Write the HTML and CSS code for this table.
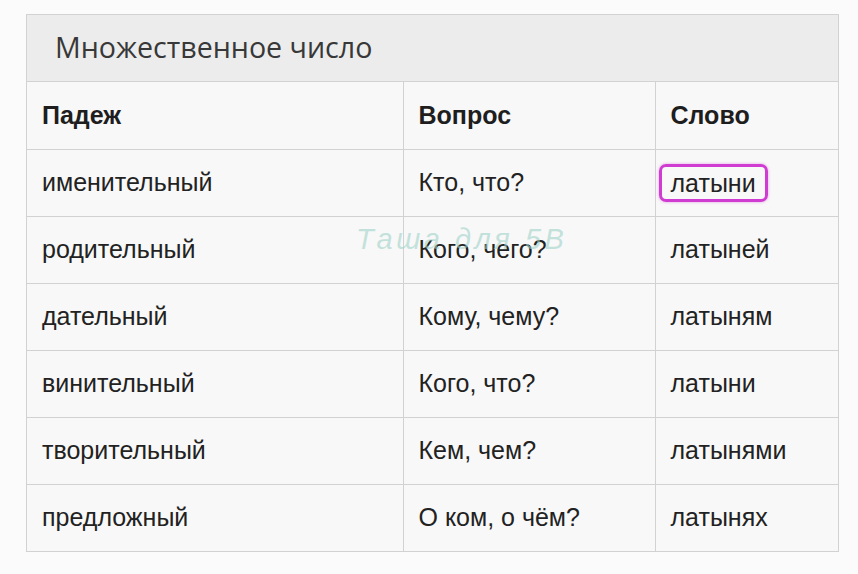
FILE: index.html
```html
<!DOCTYPE html>
<html lang="ru">
<head>
<meta charset="utf-8">
<title>Множественное число</title>
<link rel="stylesheet" href="styles.css">
</head>
<body>
<div class="card">
  <div class="caption">Множественное число</div>
  <table class="grid">
    <colgroup>
      <col class="c1"><col class="c2"><col class="c3">
    </colgroup>
    <thead>
      <tr><th>Падеж</th><th>Вопрос</th><th>Слово</th></tr>
    </thead>
    <tbody>
      <tr><td>именительный</td><td>Кто, что?</td><td><span class="mark">латыни</span></td></tr>
      <tr><td>родительный</td><td>Кого, чего?</td><td>латыней</td></tr>
      <tr><td>дательный</td><td>Кому, чему?</td><td>латыням</td></tr>
      <tr><td>винительный</td><td>Кого, что?</td><td>латыни</td></tr>
      <tr><td>творительный</td><td>Кем, чем?</td><td>латынями</td></tr>
      <tr><td>предложный</td><td>О ком, о чём?</td><td>латынях</td></tr>
    </tbody>
  </table>
  <div class="watermark">Таша для 5В</div>
</div>
</body>
</html>
```

FILE: styles.css
```css
html, body {
  margin: 0;
  padding: 0;
  background: #fbfbfb;
}
body {
  padding: 14px 0 0 26px;
  font-family: "Liberation Sans", Arial, sans-serif;
  color: #222;
}
.card {
  position: relative;
  width: 811px;
  border: 1px solid #d2d2d2;
  background: #f8f8f8;
}
.caption {
  height: 67px;
  box-sizing: border-box;
  border-bottom: 1px solid #d2d2d2;
  background: #ececec;
  padding-left: 28px;
  font-family: "Open Sans", sans-serif;
  font-size: 28.6px;
  line-height: 64px;
  color: #383838;
}
.grid {
  width: 100%;
  border-collapse: collapse;
  table-layout: fixed;
}
.c1 { width: 376px; }
.c2 { width: 252px; }
.grid th,
.grid td {
  height: 67px;
  box-sizing: border-box;
  padding: 0 0 0 15px;
  border-right: 1px solid #d2d2d2;
  border-bottom: 1px solid #d2d2d2;
  font-size: 25px;
  text-align: left;
  vertical-align: middle;
  white-space: nowrap;
}
.grid th:last-child,
.grid td:last-child {
  border-right: none;
}
.grid tbody tr:last-child td {
  border-bottom: none;
}
.grid th {
  font-weight: bold;
  color: #1e1e1e;
}
.mark {
  display: inline-block;
  margin-left: -12px;
  padding: 1px 9px;
  line-height: 30px;
  border: 3px solid #d03cd2;
  border-radius: 7px;
  box-shadow: 0 0 3px rgba(208, 60, 210, 0.5);
}
.watermark {
  position: absolute;
  left: 329px;
  top: 208px;
  font-size: 29px;
  font-style: italic;
  letter-spacing: 3.5px;
  color: rgba(160, 210, 200, 0.6);
  pointer-events: none;
}
```
